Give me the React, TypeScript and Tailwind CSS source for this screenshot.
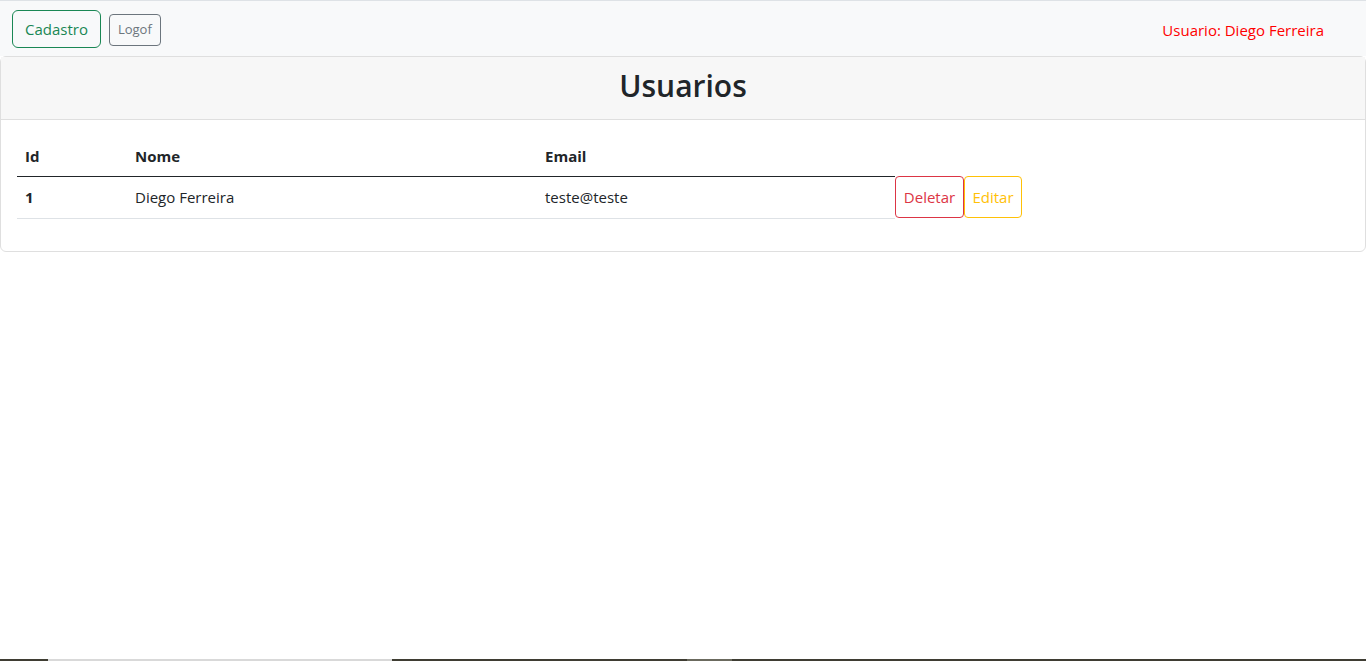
const font = { fontFamily: '"Segoe UI", "Open Sans", "Noto Sans", sans-serif' };

function NavBar() {
  return (
    <nav className="flex h-[56px] items-center border-t border-[#dee2e6] bg-[#f8f9fa] pl-3 pr-[42px]">
      <button className="mt-[1px] h-[38px] rounded-md border border-[#198754] px-3 text-[15px] text-[#198754]">
        Cadastro
      </button>
      <button className="ml-2 mt-[2px] h-[32px] rounded border border-[#6c757d] px-2 text-[13px] text-[#6c757d]">
        Logof
      </button>
      <span className="ml-auto mt-[3px] text-[15px] text-[#ff0000]">Usuario: Diego Ferreira</span>
    </nav>
  );
}

function UserTable() {
  const users = [{ id: 1, nome: 'Diego Ferreira', email: 'teste@teste' }];
  return (
    <div className="flex">
      <div className="w-[878px] text-[15px] text-[#212529]">
        <div className="flex h-[41px] items-center border-b border-[#212529] font-bold">
          <div className="w-[110px] px-2">Id</div>
          <div className="w-[410px] px-2">Nome</div>
          <div className="px-2">Email</div>
        </div>
        {users.map((u) => (
          <div key={u.id} className="flex h-[42px] items-center border-b border-[#dee2e6]">
            <div className="w-[110px] px-2 font-bold">{u.id}</div>
            <div className="w-[410px] px-2">{u.nome}</div>
            <div className="px-2">{u.email}</div>
          </div>
        ))}
      </div>
      <div className="mt-[40px] flex h-[42px]">
        <button className="h-[42px] w-[69px] rounded border border-[#dc3545] text-[15px] text-[#dc3545]">Deletar</button>
        <button className="h-[42px] w-[58px] rounded border border-[#ffc107] text-[15px] text-[#ffc107]">Editar</button>
      </div>
    </div>
  );
}

export default function App() {
  return (
    <div style={font} className="flex min-h-screen flex-col bg-white">
      <NavBar />
      <div className="rounded-md border border-[#dfdfdf] bg-white">
        <div className="flex h-[63px] items-center justify-center border-b border-[#dfdfdf] bg-[#f7f7f7] pb-[6px]">
          <h2 className="text-[30px] font-semibold text-[#212529]">Usuarios</h2>
        </div>
        <div className="px-4 pt-4 pb-[32px]">
          <UserTable />
        </div>
      </div>
      <div className="flex-1" />
      <div className="flex h-[2px]">
        <div className="w-[48px] bg-[#3f3d33]" />
        <div className="w-[344px] bg-[#d9d9d9]" />
        <div className="w-[295px] bg-[#3f3d33]" />
        <div className="w-[45px] bg-[#6b6a5e]" />
        <div className="flex-1 bg-[#3f3d33]" />
      </div>
    </div>
  );
}
